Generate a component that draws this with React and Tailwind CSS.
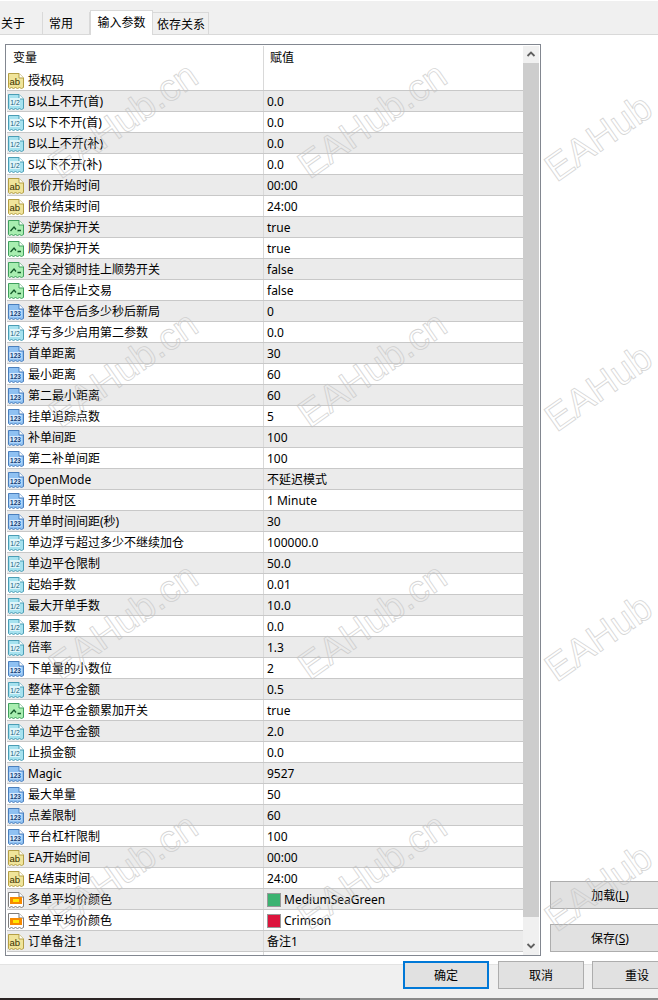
const ROWS = [
  ["ab", "授权码", ""],
  ["half", "B以上不开(首)", "0.0"],
  ["half", "S以下不开(首)", "0.0"],
  ["half", "B以上不开(补)", "0.0"],
  ["half", "S以下不开(补)", "0.0"],
  ["ab", "限价开始时间", "00:00"],
  ["ab", "限价结束时间", "24:00"],
  ["bool", "逆势保护开关", "true"],
  ["bool", "顺势保护开关", "true"],
  ["bool", "完全对锁时挂上顺势开关", "false"],
  ["bool", "平仓后停止交易", "false"],
  ["int", "整体平仓后多少秒后新局", "0"],
  ["half", "浮亏多少启用第二参数", "0.0"],
  ["int", "首单距离", "30"],
  ["int", "最小距离", "60"],
  ["int", "第二最小距离", "60"],
  ["int", "挂单追踪点数", "5"],
  ["int", "补单间距", "100"],
  ["int", "第二补单间距", "100"],
  ["int", "OpenMode", "不延迟模式"],
  ["int", "开单时区", "1 Minute"],
  ["int", "开单时间间距(秒)", "30"],
  ["half", "单边浮亏超过多少不继续加仓", "100000.0"],
  ["half", "单边平仓限制", "50.0"],
  ["half", "起始手数", "0.01"],
  ["half", "最大开单手数", "10.0"],
  ["half", "累加手数", "0.0"],
  ["half", "倍率", "1.3"],
  ["int", "下单量的小数位", "2"],
  ["half", "整体平仓金额", "0.5"],
  ["bool", "单边平仓金额累加开关", "true"],
  ["half", "单边平仓金额", "2.0"],
  ["half", "止损金额", "0.0"],
  ["int", "Magic", "9527"],
  ["int", "最大单量", "50"],
  ["int", "点差限制", "60"],
  ["int", "平台杠杆限制", "100"],
  ["ab", "EA开始时间", "00:00"],
  ["ab", "EA结束时间", "24:00"],
  ["color", "多单平均价颜色", "MediumSeaGreen", "bg-[#3cb371]"],
  ["color", "空单平均价颜色", "Crimson", "bg-[#dc143c]"],
  ["ab", "订单备注1", "备注1"],
];

const PAGE = "M0.5 0.5H11L15.5 5V14.5L13.5 15.5L11.5 14.5L9.5 15.5L7.5 14.5L5.5 15.5L3.5 14.5L1.5 15.5L0.5 14.5Z";
const FOLD = "M11 0.5V5H15.5";

function TypeIcon({ type }) {
  const styles = {
    ab: ["#f0e49a", "#b49f45"],
    half: ["#a6e2ef", "#4a9db5"],
    bool: ["#a8eeb0", "#3f9f5e"],
    int: ["#8fc1f2", "#4a7fbd"],
    color: ["#ffffff", "#7d7d7d"],
  }[type];
  return (
    <svg width="16" height="16" viewBox="0 0 16 16" className="shrink-0">
      <path d={PAGE} fill={styles[0]} stroke={styles[1]} />
      <path d={FOLD} fill="#ffffff" stroke={styles[1]} />
      {type === "ab" && (
        <text x="1.5" y="11.5" fontSize="9.5" fontFamily="Liberation Sans, sans-serif" fill="#3a3200">ab</text>
      )}
      {type === "half" && (
        <>
          <rect x="2" y="4" width="10" height="8" fill="#dff5fa" />
          <text x="2.2" y="10.8" fontSize="7" textLength="9.5" lengthAdjust="spacingAndGlyphs" fontFamily="Liberation Sans, sans-serif" fill="#155a78">1/2</text>
        </>
      )}
      {type === "bool" && <path d="M2.5 11L6 7L8 9.5M9.5 10.5H13" fill="none" stroke="#145a2a" strokeWidth="1.3" />}
      {type === "int" && (
        <>
          <rect x="1.5" y="6" width="12" height="6.5" fill="#d8ebff" />
          <text x="2" y="11.7" fontSize="6.5" fontWeight="700" textLength="11" lengthAdjust="spacingAndGlyphs" fontFamily="Liberation Sans, sans-serif" fill="#123e78">123</text>
        </>
      )}
      {type === "color" && (
        <>
          <rect x="2" y="5" width="12" height="7" fill="#f78a00" />
          <rect x="5" y="7" width="6" height="3" fill="#ffe800" />
        </>
      )}
    </svg>
  );
}

function Chevron({ down }) {
  return (
    <svg width="16" height="17" viewBox="0 0 16 17">
      <path d={down ? "M4.5 7L8 10.5L11.5 7" : "M4.5 10L8 6.5L11.5 10"} fill="none" stroke="#606060" strokeWidth="1.8" />
    </svg>
  );
}

const WATERMARKS = [
  ["EAHub.cn", "left-[53px]", "top-[150px]"],
  ["EAHub.cn", "left-[302px]", "top-[150px]"],
  ["EAHub", "left-[549px]", "top-[153px]"],
  ["EAHub.cn", "left-[53px]", "top-[399px]"],
  ["EAHub.cn", "left-[302px]", "top-[399px]"],
  ["EAHub", "left-[549px]", "top-[403px]"],
  ["EAHub.cn", "left-[53px]", "top-[651px]"],
  ["EAHub.cn", "left-[302px]", "top-[651px]"],
  ["EAHub", "left-[549px]", "top-[653px]"],
  ["EAHub.cn", "left-[53px]", "top-[901px]"],
  ["EAHub.cn", "left-[302px]", "top-[901px]"],
  ["EAHub", "left-[549px]", "top-[903px]"],
];

function Tab({ label, className }) {
  return (
    <div className={"flex items-center border-[#d9d9d9] " + className}>{label}</div>
  );
}

function Btn({ children, className }) {
  return (
    <div className={"flex h-[28px] shrink-0 items-center justify-center bg-[#e1e1e1] pt-px " + className}>
      {children}
    </div>
  );
}

export default function App() {
  return (
    <div className="relative flex h-[1000px] w-[658px] flex-col overflow-hidden bg-white font-['Noto_Sans','Noto_Sans_CJK_SC',sans-serif] text-[12px] leading-none text-black">
      {/* tab strip */}
      <div className="mt-px flex h-[34px] shrink-0 items-end border-b border-[#d9d9d9] bg-[#f0f0f0]">
        <Tab label="关于" className="h-[22px] w-[43px] border-r pl-px pt-[2px]" />
        <Tab label="常用" className="h-[22px] w-[47px] border-r pl-[6px] pt-[2px]" />
        <Tab label="输入参数" className="relative top-px h-[25px] w-[63px] justify-center border-x border-t bg-white" />
        <Tab label="依存关系" className="h-[22px] w-[56px] border-r border-t pl-[4px] pt-[2px]" />
      </div>

      {/* body */}
      <div className="mt-[9px] flex min-h-0 flex-1">
        <div className="ml-[5px] flex h-[912px] w-[536px] shrink-0 border border-[#828790] bg-white pl-px pt-px">
          <div className="flex w-[516px] flex-col">
            <div className="flex h-[24px] shrink-0">
              <div className="flex w-[256px] items-center pl-[6px]">变量</div>
              <div className="flex flex-1 items-center border-l border-[#d9d9d9] pl-[6px]">赋值</div>
            </div>
            {ROWS.map(([type, name, value, swatch], i) => (
              <div
                key={name + i}
                className={
                  "flex h-[21px] shrink-0 border-b border-[#c8c8c8] " + (i % 2 ? "bg-[#ebebeb]" : "bg-white")
                }
              >
                <div className="flex w-[256px] items-center gap-[4px] pl-px pt-[2px]">
                  <TypeIcon type={type} />
                  <span className="whitespace-nowrap">{name}</span>
                </div>
                <div className="flex flex-1 items-center gap-[3px] border-l border-[#d9d9d9] pl-[3px] pt-[2px]">
                  {swatch && <span className={"h-[14px] w-[14px] border border-[#999] " + swatch} />}
                  <span className="whitespace-nowrap">{value}</span>
                </div>
              </div>
            ))}
            <div className="ml-[256px] flex-1 border-l border-[#d9d9d9]" />
          </div>
          <div className="mr-px flex w-[16px] flex-col bg-[#f0f0f0]">
            <div className="flex h-[17px] shrink-0 items-center justify-center">
              <Chevron />
            </div>
            <div className="h-[854px] shrink-0 bg-[#cdcdcd]" />
            <div className="flex flex-1 items-end justify-center pb-[1px]">
              <Chevron down />
            </div>
          </div>
        </div>

        <div className="ml-[9px] flex flex-1 flex-col items-start gap-[15px] pt-[837px]">
          <Btn className="w-[120px] border border-[#adadad]">加载(<span className="underline">L</span>)</Btn>
          <Btn className="w-[120px] border border-[#adadad]">保存(<span className="underline">S</span>)</Btn>
        </div>
      </div>

      {/* bottom strip */}
      <div className="flex h-[34px] shrink-0 items-start gap-[9px] border-t border-[#e3e3e3] bg-[#f0f0f0] pl-[403px]">
        <Btn className="-mt-[4px] w-[86px] border-2 border-[#0078d7]">确定</Btn>
        <Btn className="-mt-[4px] w-[86px] border border-[#adadad]">取消</Btn>
        <Btn className="-mt-[4px] -ml-[1px] w-[90px] border border-[#adadad]">重设</Btn>
      </div>
      <div className="flex h-[2px] shrink-0">
        <div className="w-[300px] bg-[#2b2424]" />
        <div className="flex-1 bg-[#8a8a8a]" />
      </div>

      {/* watermark overlay */}
      {WATERMARKS.map(([t, l, top], i) => (
        <div
          key={i}
          className={
            "pointer-events-none absolute origin-left -rotate-[35deg] whitespace-nowrap font-['Liberation_Sans',sans-serif] text-[38px] leading-none text-transparent opacity-70 [-webkit-text-stroke:0.8px_#c4c4c4] " +
            l + " " + top
          }
        >
          {t}
        </div>
      ))}
    </div>
  );
}
